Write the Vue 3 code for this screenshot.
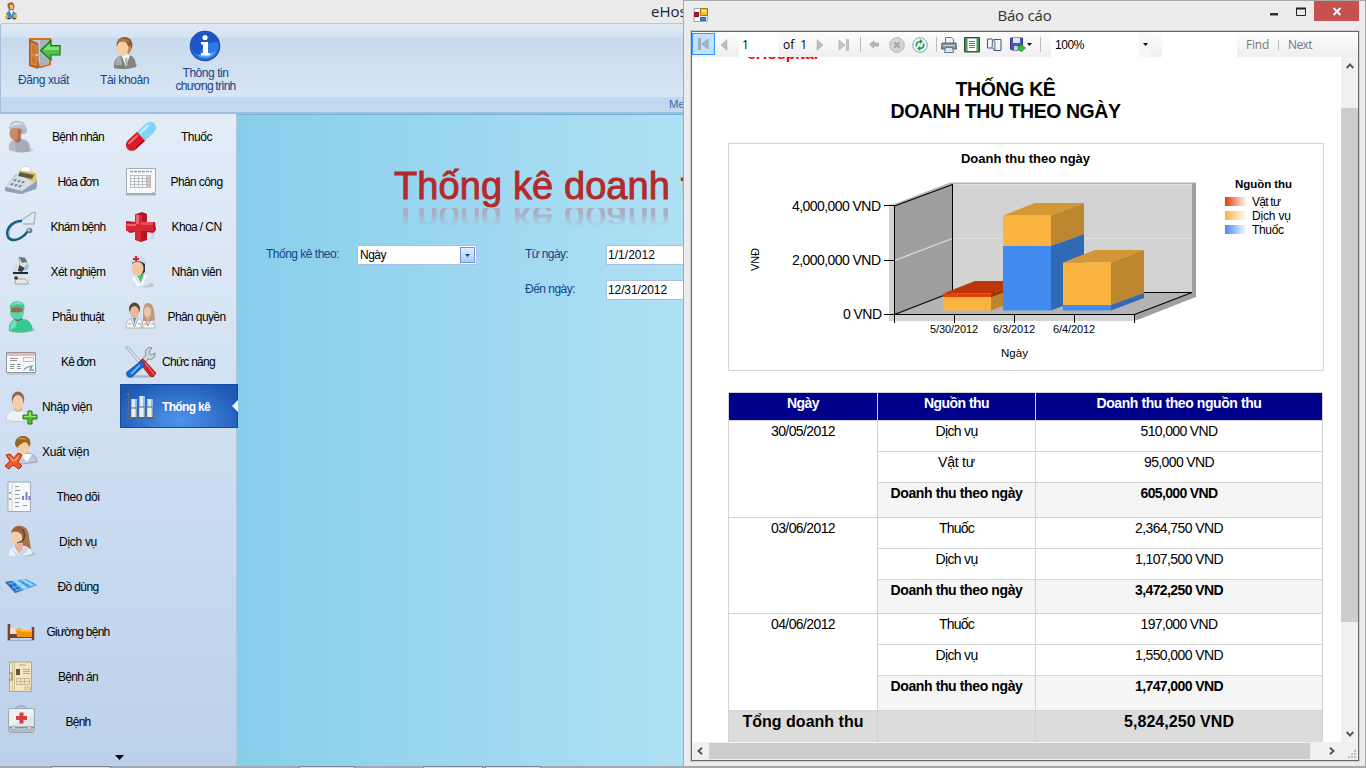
<script setup>
// Tunes letter-spacing so that a label takes the given width in pixels.
const vFit = {
  mounted(el, { value }) {
    if (!value) return
    const w = el.getBoundingClientRect().width
    el.style.letterSpacing = (value - w) / el.textContent.length + 'px'
  }
}

const shadow = '<ellipse cx="19" cy="29" rx="12" ry="2.5" fill="#7890ad" opacity=".3"/>'
const icons = {
  patient: `<ellipse cx="18" cy="29" rx="11" ry="2.500" fill="#7890ad" opacity=".25"/><path d="M4 29c-1-7 2-10 7-11h7c6 1 8 6 7 12-6 2-15 2-21-1z" fill="#b9bac6"/><path d="M10 19c5 1 10-1 13 3l2 8c-6 2-11 1-14 0z" fill="#a8a9b6"/><path d="M9 16h7v3q-4 5-7 0z" fill="#a36749"/><circle cx="18" cy="9" r="4" fill="#b5b6c3"/><ellipse cx="10.500" cy="12" rx="6" ry="7.500" fill="#c58a66"/><path d="M13 8h3.500c0 5-1 8-4 11z" fill="#aa7355"/><path d="M4 8C4 1 9-1 13 0c6 0 9 4 7 9-3-2-10-3-16-1z" fill="#bfc0cc"/><path d="M5 6C7 1 15 0 18 4c-4-1-9 0-13 2z" fill="#e4e4ec"/>`,
  invoice: `<path d="M0 22L11 8l21 6-1 9-15 5-16-3z" fill="#8ba0b8"/><path d="M1 21L12 8l19 7-14 11z" fill="#d7dee7"/><path d="M13 7l2-3 16 3 1 8-5 1z" fill="#dfc35e"/><path d="M15 6l14 3-2 4-14-3z" fill="#5b5b4c"/><path d="M16 1l8-1 2 6-10-1z" fill="#fff" stroke="#bac4d0" stroke-width=".6"/><g fill="#6f8297"><path d="M10 13l2 .5-2 2-2-1zM14 14l2 .5-2 2-2-1zM18 15l2 .5-2 2-2-1zM7 17l2 .5-2 2-2-1zM11 18l2 .5-2 2-2-1zM15 19l2 .5-2 2-2-1z"/></g><path d="M0 21l17 4 15-10v6L17 28 0 25z" fill="#8ea2ba"/>`,
  stetho: `<path d="M14 11L27 2q5-2 3 3l-1 8-11 0" fill="none" stroke="#a9b2bb" stroke-width="1.300"/><path d="M17 10C6 10 0 19 3 26c3 5 10 3 14 0 4-2 5-6 7-7" fill="none" stroke="#16607c" stroke-width="2.500"/><path d="M15 11C8 12 3 18 4 24" fill="none" stroke="#559aaf" stroke-width=".8"/><circle cx="24.500" cy="19.500" r="2.800" fill="#747e86"/><circle cx="24" cy="19" r="1.200" fill="#ccd2d5"/>`,
  microscope: `<path d="M14 1l6 1 3 8-5 4-3-3z" fill="#e3e4df" stroke="#8b8b82" stroke-width=".6"/><path d="M14 1l3 6 5-1-2-4z" fill="#6d7278"/><path d="M14 9l6 3-3 4-4-1z" fill="#3e4143"/><path d="M13 9c-6 5-4 13 2 15h5" fill="none" stroke="#dddcd3" stroke-width="4"/><path d="M8 16h15v2H8z" fill="#242827"/><path d="M20 9h4l-1 4-4 2z" fill="#8fcbdc"/><path d="M12 23h8l3 3v2H10v-3z" fill="#e9e8df" stroke="#8a8b84" stroke-width=".7"/><circle cx="11" cy="22" r="1.800" fill="#333"/>`,
  surgeon: `${shadow}<path d="M4 30c-1-8 3-12 9-13l6 1c6 1 8 6 9 11-6 3-17 4-24 1z" fill="#39c894"/><path d="M5 29c0-7 2-10 7-11l-1 8z" fill="#72dfb5"/><path d="M8 14h9v4q-5 4-8 0z" fill="#7e4b35"/><ellipse cx="12" cy="11" rx="6.500" ry="8" fill="#a1674a"/><path d="M5 8C4 1 11-1 16 1c4 2 4 5 3 8-4-3-9-3-14-1z" fill="#43c494"/><path d="M5 11l8 .5 6-1.500-1 6c-4 4-9 3-12-1z" fill="#58d7ad"/><path d="M6 5c3-5 9-5 12-1-4-1-8-1-12 1z" fill="#83e3bd"/>`,
  rx: `<path d="M1.500 6.500h29v20h-29z" fill="#f8fafb" stroke="#8e979f"/><path d="M2 7h28v3H2z" fill="#f3b4ae"/><path d="M5 12.500h8m-8 2h7m-7 4h5m2 0h4m-11 2h4m3 0h3M5 22.500h4m3 0h4" stroke="#7f868c" stroke-width=".9"/><path d="M18.500 11.500h10v4h-10z" fill="#f4f6f7" stroke="#b9bec3"/><path d="M19 24c1-3 5-3 8-4l-2 4h4" fill="none" stroke="#6f9fc4" stroke-width="1.500"/><path d="M2 28h29" stroke="#a9b6c6"/>`,
  admit: `<ellipse cx="15" cy="28" rx="14" ry="3" fill="#94a8c3" opacity=".5"/><path d="M1 29c0-7 4-10 11-10 8 0 12 4 13 10-7 2-17 2-24 0z" fill="#eef1f5" stroke="#c1c8d1" stroke-width=".7"/><path d="M9 19q4 4 8 0v-5H9z" fill="#d9b28d"/><ellipse cx="13" cy="8" rx="6.300" ry="7.500" fill="#8b6a50"/><ellipse cx="12.800" cy="11.500" rx="5.300" ry="7.500" fill="#f1ceac"/><path d="M23 20h4v4h5v4h-5v5h-4v-5h-5v-4h5z" fill="#54b936" stroke="#247d18"/><path d="M24 21h2v4h5v1H19v-1h5z" fill="#98e767"/>`,
  discharge: `<path d="M9 27c0-7 4-10 12-10 7 0 11 4 11 9l-14 2z" fill="#c3c8da" stroke="#858ca4" stroke-width=".7"/><path d="M15 18l7 8 5-8z" fill="#f9faff"/><ellipse cx="18" cy="7" rx="7.500" ry="7" fill="#a0661d"/><ellipse cx="18.500" cy="12" rx="5.500" ry="6.500" fill="#f3cda4"/><path d="M10 8c0-5 4-8 8-8s8 3 7 8c-1-2-2-2-4-2-4 0-6 4-10 5z" fill="#9c651d"/><path d="M12 3q6-3 10 1-5-1-10-1" fill="#cb9546"/><path d="M1 19l4-1 4 4 4-5 4 2-4 7 4 4-3 3-6-4-4 4-4-3 5-5z" fill="#ef5b26" stroke="#ae2c11"/><path d="M3 19l6 5 5-5-1 4-5 3z" fill="#ff9a65"/>`,
  chart: `<path d="M3 1h22.500v29.500H3z" fill="#f6f8fa" stroke="#a1acb7"/><path d="M7 1v29" stroke="#cbd3db"/><path d="M10 5.500h4m-4 4h5m-5 4h4m-4 4h5m-5 4h4m-4 4h4m4-1h4" stroke="#8f98a1" stroke-width="1"/><path d="M18 19v-4m3.500 4v-8m3 8v-4" stroke="#8182d5" stroke-width="2"/><path d="M5 11v2m0 4v2" stroke="#555" stroke-width="1"/>`,
  service: `<ellipse cx="21" cy="28" rx="9" ry="2.500" fill="#7890ad" opacity=".35"/><path d="M9 1c10-4 15 2 15 10l2 12-12-2z" fill="#a87346"/><path d="M4 29c0-6 3-8 7-9h9c4 1 7 5 7 8-7 2-16 3-23 1z" fill="#eaf0fc"/><path d="M10 17h8v6l-4 5-4-6z" fill="#e8b09a"/><path d="M6 21l7 8 7-8 4 2-7 7h-6z" fill="#cbd7ef"/><ellipse cx="11.500" cy="10.500" rx="6" ry="8" fill="#f3cda8"/><path d="M6 7C7-1 18-2 20 6l-1 11c-2-3-1-7-3-9C12 5 9 5 6 7z" fill="#97613a"/><path d="M17 3c4 5 4 12-5 14" fill="none" stroke="#4d443d" stroke-width="1.200"/>`,
  supplies: `<path d="M0 11l21-3 11 6-21 8z" fill="#3f91e0"/><path d="M0 11l7-1 9 9-6 3z" fill="#2967c5"/><path d="M8 10l4-1 11 8-4 2zM16 9l3-1 10 6-3 1z" fill="#b2e6fb"/><path d="M3 13l18-4M7 17l19-6M10 20l20-7M5 11l8 9M12 10l8 8M19 9l8 6" stroke="#79caf5" stroke-width=".8"/>`,
  bed: `<path d="M4 8v16M28 11v13" stroke="#774236" stroke-width="2.600"/><path d="M4 17h24v5H4z" fill="#7c3e2a"/><path d="M5 12h6l3 2v4H5z" fill="#e9e0d6"/><path d="M11 13l4-1 2 2h10v7H12z" fill="#f5940c"/><path d="M10 13.500h4l3 1.500h10" fill="none" stroke="#ffc141" stroke-width="1.500"/><path d="M2 24.500h27" stroke="#8094ad" opacity=".6"/>`,
  record: `<path d="M4.500 1h22v29.500h-22z" fill="#f3e6c1" stroke="#b0a489"/><path d="M7.500 1v29m2-29v29" stroke="#d0c39b"/><path d="M14 4h7m-3 4.500h7m-7 2h7m-7 2h7" stroke="#b0a385" stroke-width=".9"/><path d="M11 8h4v6h-4z" fill="#665338"/><path d="M11.500 17.500h13v6h-13zM11.500 20.500h13m-9-3v6m4-6v6M20 26h5v2.500h-5z" fill="none" stroke="#c0b28d" stroke-width=".9"/><path d="M4 12h3v7H4" fill="none" stroke="#a87727" stroke-width="1.200"/>`,
  firstaid: `<path d="M11 3q0-3 5-3t5 3" fill="none" stroke="#a2a9b1" stroke-width="1.300"/><rect x="3.500" y="2.500" width="26" height="24" rx="2" fill="#eef1f4" stroke="#9aa5b1"/><path d="M4 20L29 8v12H4z" fill="#dbe0e5" opacity=".7"/><path d="M3.500 20h26v6h-26z" fill="#b3bdc7"/><path d="M4 21.500h25" stroke="#84929f"/><circle cx="8.500" cy="22" r="1.800" fill="#dbe1e6" stroke="#84929f" stroke-width=".6"/><circle cx="24.500" cy="22" r="1.800" fill="#dbe1e6" stroke="#84929f" stroke-width=".6"/><path d="M14.500 6.500h4v3.500h3.500v4h-3.500v3.500h-4V14H11v-4h3.500z" fill="#d93c40"/>`,
  pill: `<g transform="rotate(-43 16 16)"><rect x="-2" y="9.500" width="37" height="12" rx="6" fill="#7fd4f8"/><path d="M16.500 9.500v12H4a6 6 0 0 1 0-12z" fill="#d71c2a"/><path d="M3 12.500h11" stroke="#f07780" stroke-width="2" stroke-linecap="round"/><path d="M19 12.500h10" stroke="#c5eeff" stroke-width="2.500" stroke-linecap="round"/><path d="M5 20.500h11" stroke="#a30d18" stroke-width="1.500"/></g>`,
  calendar: `<path d="M1 27h30v2.500H1z" fill="#75828e" opacity=".55"/><path d="M1.500 2.500h29v23l-4 2h-25z" fill="#f9fafa" stroke="#a3adb3"/><path d="M5 5.500h22" stroke="#9aa2aa" stroke-width="1.500" stroke-dasharray="3 1"/><path d="M21 9h5v13h-5z" fill="#f6b9bd"/><path d="M5 9.500h21M5 12.500h21M5 15.500h21M5 18.500h21M5 21.500h16M5.500 9v13m4-13v13m4-13v13m4-13v13m4-13v13m4-13v13" fill="none" stroke="#b2babf" stroke-width=".9"/>`,
  cross: `<path d="M20 28q6 3 6-3v-5h5l-3 8z" fill="#8b96a8" opacity=".25"/><path d="M11 3l6-2 5 2v9l8-1 1 8-3 3-6-1v8l-6 2-6-2v-8l-5 1-4-3v-9l10 1z" fill="#b31723"/><path d="M10 3l7 1v8h11v8H16v10l-6-2v-8H1v-8h9z" fill="#d92834"/><path d="M11 4l3 0v9h-3zM2 13h9v2H2z" fill="#ee666d"/><path d="M16 11l12 0v3H16z" fill="#e4505a"/>`,
  nurse: `<ellipse cx="21" cy="29" rx="8" ry="2.500" fill="#7890ad" opacity=".35"/><path d="M6 30c0-7 3-10 8-11 7-1 11 4 11 9-6 3-13 4-19 2z" fill="#d6e4fa"/><path d="M12 19l7-1-3 9z" fill="#59c060"/><path d="M8 21l6 9M21 19l-5 10" stroke="#f9fcff" stroke-width="2.500"/><path d="M15 6h5v10l-4 3z" fill="#35303a"/><ellipse cx="12.500" cy="12.500" rx="6" ry="7.500" fill="#efc8a2"/><path d="M7 8c3-3 8-3 12 1l2-3-7-3-7 2z" fill="#4a3a38"/><path d="M6 7C5-2 20-3 21 6l-1 2C16 4 11 5 6 7z" fill="#c9defa"/><path d="M10 0h2v2h2v2h-2v2h-2V4H8V2h2z" fill="#e21d30"/>`,
  team: `<path d="M1 27c0-7 3-9 6-10h6c4 1 5 4 5 10zM16 27c0-7 3-9 7-9 6 0 7 4 7 9z" fill="#f6f6f3" stroke="#a0a39d" stroke-width=".7"/><path d="M18 20c0-12 0-18 5-18s6 6 7 17l-4 1h-6z" fill="#bd9a7d"/><ellipse cx="9.500" cy="8" rx="5.500" ry="6.500" fill="#594338"/><ellipse cx="9.500" cy="11" rx="4.500" ry="6" fill="#e9b79c"/><ellipse cx="22.500" cy="11" rx="3.500" ry="5.500" fill="#edc4a8"/><path d="M8 17h3l-1.500 7z" fill="#4a91bf"/><path d="M21 17h4l-2 6z" fill="#e59a9a"/><path d="M6 18l3.500 8 3.500-8m7 0l3 7 3-7M3 23h3m7 0h3m3 0h3m4 0h3" fill="none" stroke="#888" stroke-width=".8"/>`,
  tools: `<ellipse cx="15" cy="30.500" rx="14" ry="1.300" fill="#55687c" opacity=".35"/><path d="M.5 1l3 0 14 16-2 2z" fill="#e3e8ec" stroke="#7d8b96" stroke-width=".7"/><path d="M16 14l5-5c-2-5 2-9 6-7l-3 4 2 3 4-2c0 6-4 7-7 6l-4 5z" fill="#d0d6da" stroke="#68747c" stroke-width=".8"/><path d="M14 16l4-3 13 14-3 4-3-1z" fill="#d92327" stroke="#99131c" stroke-width=".8"/><path d="M16 15l4 4L8 30c-3 3-8 0-6-4z" fill="#176cd0" stroke="#1848a0" stroke-width=".8"/><path d="M15 19L6 28" stroke="#7dd0ff" stroke-width="1.500"/><path d="M20 17l9 11" stroke="#ff8a83"/>`,
  stats: `<path d="M3.500 29V3m-2 2l2-3 2 3M2 28.500h28M1 22.500h3m-3-7h3m-3-6h3" fill="none" stroke="#51698c" stroke-width="1"/><path d="M6 9h6v9H6zM14 6h6v11h-6zM22 9h6v9h-6z" fill="#8dbcf6"/><path d="M6 18h6v9H6zM14 17h6v10h-6zM22 17h6v10h-6z" fill="#cfd1ce"/><path d="M7 9h3v18H7zM15 6h3v21h-3zM23 9h3v18h-3z" fill="#f4f9ff" opacity=".75"/><path d="M6 18h6m2-1h6m2 0h6M12 18v10m8-10v10m8-10v10M6 27.500h6m2 0h6m2 0h6" stroke="#5c6470"/>`,
  logout: `<path d="M1 1h22v27l-10 3-2 0-10-2z" fill="#d66c21"/><path d="M4 3h17v24l-9 2z" fill="#c2c9d2"/><path d="M12 3h9v24l-9 2z" fill="#a9b3c0"/><path d="M1 2l9 4v26L1 29z" fill="#bd6428"/><path d="M2 4l8 4v22l-8-2z" fill="#dc8a42" stroke="#984616" stroke-width=".7"/><path d="M4 8l4 2v7l-4-1zm0 11l4 1v7l-4-1z" fill="#c87634"/><circle cx="9" cy="18" r="1" fill="#ffe2a4"/><path d="M12.500 13.500L23 3.500v5h9v9.500h-9v5z" fill="#55bd4c" stroke="#087c16" stroke-width="1.200"/><path d="M15 13l7-6v3h9v3z" fill="#85df77"/>`,
  account: `<ellipse cx="20" cy="28" rx="9" ry="2.500" fill="#7890ad" opacity=".35"/><path d="M5 31c-1-9 4-12 9-13h6c5 1 7 6 7 12-6 2-15 3-22 1z" fill="#818282"/><path d="M6 28c0-6 3-9 6-9l1 9z" fill="#a8aaab"/><path d="M12 17l5 13 4-12z" fill="#f4f5f6"/><path d="M16 22l2-2 1 8-2 2z" fill="#a9abad"/><ellipse cx="15.500" cy="8" rx="8" ry="8" fill="#8c5a32"/><path d="M17 9h5v5l-3 4z" fill="#c4885a"/><ellipse cx="13.500" cy="11.500" rx="5.800" ry="7.500" fill="#f6cf9f"/><path d="M8 6C10 0 19 0 21 6c-4-2-9-2-13 0z" fill="#a9784a"/>`,
  info: `<circle cx="16" cy="16" r="15.300" fill="#1a4fae"/><circle cx="16" cy="15.800" r="13.900" fill="#2b78e4"/><path d="M2.500 18C0 5 14-1 24 4q4 3 6 8-15-1-20 13-6-2-7.500-7z" fill="#1c55c4"/><path d="M8 25q7 5 15 1l4-5q-6 3-19 4z" fill="#6dbcff" opacity=".7"/><circle cx="16" cy="7.500" r="2.600" fill="#fff"/><path d="M12 12h7v11h2v2.500h-9V23h2v-8.500h-2z" fill="#fff"/>`,
  app: `<path d="M4 6c-2-6 10-9 10 0l-1 6-7 0z" fill="#a76c2a"/><path d="M7 4h5v6H8z" fill="#f0bd84"/><path d="M2 17l4-5 6 1 5 4-2 7H4z" fill="#3f8fc2"/><path d="M7 12l3 7 2-6z" fill="#fff"/><path d="M2 17l-2 7h4l1-4zM13 18l4-1 1 7-5-1z" fill="#e9ae3c"/><path d="M4 23h4v2H3zM11 23h5v2h-4z" fill="#333"/>`
}

const rowsLeft = [
  ['patient', 'Bệnh nhân', 52], ['invoice', 'Hóa đơn', 41], ['stetho', 'Khám bệnh', 55],
  ['microscope', 'Xét nghiệm', 55], ['surgeon', 'Phẫu thuật', 52], ['rx', 'Kê đơn', 34],
  ['admit', 'Nhập viện', 50, true], ['discharge', 'Xuất viện', 47, true], ['chart', 'Theo dõi', 43],
  ['service', 'Dịch vụ', 38], ['supplies', 'Đồ dùng', 41], ['bed', 'Giường bệnh', 63],
  ['record', 'Bệnh án', 40], ['firstaid', 'Bệnh', 25]
]
const rowsRight = [
  ['pill', 'Thuốc', 31], ['calendar', 'Phân công', 52], ['cross', 'Khoa / CN', 50],
  ['nurse', 'Nhân viên', 50], ['team', 'Phân quyền', 58], ['tools', 'Chức năng', 53, true],
  ['stats', 'Thống kê', 48, true]
]
const days = [
  { date: '30/05/2012', items: [['Dịch vụ', 42, '510,000 VND', 77], ['Vật tư', 37, '95,000 VND', 70]], sum: '605,000 VND', sw: 77 },
  { date: '03/06/2012', items: [['Thuốc', 35, '2,364,750 VND', 88], ['Dịch vụ', 42, '1,107,500 VND', 88]], sum: '3,472,250 VND', sw: 88 },
  { date: '04/06/2012', items: [['Thuốc', 35, '197,000 VND', 77], ['Dịch vụ', 42, '1,550,000 VND', 88]], sum: '1,747,000 VND', sw: 88 }
]
const statusTabs = [[51, 60], [299, 56], [423, 60], [485, 56]]
const legend = [['Vật tư', 29, 'gr'], ['Dịch vụ', 39, 'go'], ['Thuốc', 32, 'gb']]
</script>

<template>
  <div class="desktop">
    <header class="titlebar">
      <svg class="appicon" width="16" height="18" viewBox="0 0 18 26" v-html="icons.app"></svg>
      <span class="maintitle">eHospital</span>
    </header>
    <section class="ribbon">
      <div class="tools">
        <div class="tool t1"><svg width="32" height="32" viewBox="0 0 32 32" v-html="icons.logout"></svg><span v-fit="51">Đăng xuất</span></div>
        <div class="tool t2"><svg width="32" height="32" viewBox="0 0 32 32" v-html="icons.account"></svg><span v-fit="49">Tài khoản</span></div>
        <div class="tool t3"><svg width="32" height="32" viewBox="0 0 32 32" v-html="icons.info"></svg><span v-fit="46">Thông tin</span><span v-fit="60">chương trình</span></div>
      </div>
      <div class="group">Menu</div>
    </section>
    <div class="body">
      <nav class="side">
        <div class="cols">
          <div class="col">
            <div v-for="r in rowsLeft" :key="r[1]" class="item" :class="{ near: r[3] }">
              <svg width="32" height="32" viewBox="0 0 32 32" v-html="icons[r[0]]"></svg>
              <div class="lab"><span v-fit="r[2]">{{ r[1] }}</span></div>
            </div>
          </div>
          <div class="col">
            <div v-for="r in rowsRight" :key="r[1]" class="item" :class="{ near: r[3], active: r[0] === 'stats' }">
              <svg width="32" height="32" viewBox="0 0 32 32" v-html="icons[r[0]]"></svg>
              <div class="lab"><span v-fit="r[2]">{{ r[1] }}</span></div>
              <i v-if="r[0] === 'stats'" class="notch"></i>
            </div>
          </div>
        </div>
        <svg class="more" width="9" height="5" viewBox="0 0 9 5"><path d="M0 0h9L4.500 5z" /></svg>
      </nav>
      <main class="content">
        <div class="banner">
          <div class="big">Thống kê doanh thu</div>
          <div class="mirror"><div class="big">Thống kê doanh thu</div></div>
        </div>
        <div class="form">
          <label class="l1"><span v-fit="73">Thống kê theo:</span></label>
          <div class="select"><span v-fit="26">Ngày</span><b><svg width="5" height="3" viewBox="0 0 5 3"><path d="M0 0h5L2.500 3z" fill="#15428b" /></svg></b></div>
          <label class="l2"><span v-fit="43">Từ ngày:</span></label>
          <div class="field"><span v-fit="47">1/1/2012</span></div>
          <label class="l3"><span v-fit="50">Đến ngày:</span></label>
          <div class="field f2"><span v-fit="59">12/31/2012</span></div>
        </div>
      </main>
    </div>
    <footer class="status"><i v-for="s in statusTabs" :key="s[0]" :style="{ left: s[0] + 'px', width: s[1] + 'px' }"></i></footer>

    <section class="win">
      <div class="wtitle">
        <svg class="wicon" width="14" height="14" viewBox="0 0 14 14"><path d="M0 .5h13.500v13H0z" fill="#e8e8e8" stroke="#aaa" /><path d="M1 10h5v3H1zM1 1h4v3H1z" fill="#fff" /><path d="M6.500.5h7v7h-7z" fill="#f6be24" stroke="#a87b0c" /><path d="M8 2h4v2H8z" fill="#ffe480" /><path d="M.5 4.500h4v4h-4z" fill="#c6181c" stroke="#861015" /><path d="M6.500 9.500h5v3h-5z" fill="#3e87dd" stroke="#2461a7" /></svg>
        <span v-fit="54">Báo cáo</span>
        <div class="ctl">
          <svg width="45" height="20" viewBox="0 0 45 20"><path d="M8 12h8v2.500H8z" fill="#333" /><path d="M34.500 7.500h9v7h-9z" fill="none" stroke="#222" /><path d="M34 6.500h10v2H34z" fill="#222" /></svg>
          <div class="close"><svg width="8" height="7" viewBox="0 0 8 7"><path d="M.6 0l6.800 7M7.400 0L.6 7" stroke="#fff" stroke-width="1.800" /></svg></div>
        </div>
      </div>
      <div class="frame">
        <div class="bar">
          <div class="slot first"><svg width="12" height="12" viewBox="0 0 12 12"><path d="M.5.500h2v11h-2zM10 1v10L4 6z" fill="#a9b4c1" stroke="#8797a8" stroke-width=".7" /></svg></div>
          <div class="slot s18"><svg width="8" height="12" viewBox="0 0 8 12"><path d="M7 .5v11L1 6z" fill="#bbb" stroke="#aaa" stroke-width=".5" /></svg></div>
          <div class="page">1</div>
          <div class="slot s29"><span class="of" v-fit="24">of&nbsp; 1</span></div>
          <div class="slot s24"><svg width="8" height="12" viewBox="0 0 8 12"><path d="M1 .5v11L7 6z" fill="#bbb" stroke="#aaa" stroke-width=".5" /></svg></div>
          <div class="slot s23"><svg width="12" height="12" viewBox="0 0 12 12"><path d="M8.500.500h2v11h-2zM1 1v10l6-5z" fill="#c5c5c5" stroke="#aaa" stroke-width=".7" /></svg></div>
          <div class="slot s10"><i class="sep"></i></div>
          <div class="slot s17"><svg width="10" height="9" viewBox="0 0 10 9"><path d="M.5 4.500L5 .8V3h4.500v3H5v2.200z" fill="#b8b8b8" stroke="#a0a0a0" stroke-width=".6" /></svg></div>
          <div class="slot s30"><svg width="16" height="16" viewBox="0 0 16 16"><circle cx="8" cy="8" r="7.300" fill="#d6d6d6" stroke="#b5b5b5" /><path d="M5.300 5.300l5.400 5.400m0-5.400l-5.400 5.400" stroke="#a4a4a4" stroke-width="2" /></svg></div>
          <div class="slot s16"><svg width="16" height="16" viewBox="0 0 16 16"><circle cx="8" cy="8" r="7.300" fill="#eef6fc" stroke="#7ba8d0" /><path d="M4.500 9.500c-1-3 1-5 4-5M11.500 6.500c1 3-1 5-4 5" fill="none" stroke="#20a241" stroke-width="1.700" /><path d="M7.800 2l3.200 2.600-3.200 2.600zM8.200 14L5 11.400l3.200-2.600z" fill="#20a241" /></svg></div>
          <div class="slot s16"><i class="sep"></i></div>
          <div class="slot s10"><svg width="16" height="16" viewBox="0 0 16 16"><path d="M4.500 .5h6l2 2V7h-8z" fill="#eef4fa" stroke="#68727c" /><path d="M1 6h14l.5 6H.5z" fill="#8b959f" stroke="#59626a" /><path d="M2 8h12v1H2z" fill="#c8d0d6" /><path d="M4.500 10.500h7l1 5h-9z" fill="#d5e8f9" stroke="#66798a" /></svg></div>
          <div class="slot s36"><svg width="16" height="16" viewBox="0 0 16 16"><path d="M.5.500h15v14.500H.5z" fill="#4f8f55" stroke="#254f2a" /><path d="M3.500 1.500h9V14h-9z" fill="#fff" /><path d="M5 4.500h6m-6 2h6m-6 2h6m-6 2h6" stroke="#667c9e" /></svg></div>
          <div class="slot s8"><svg width="15" height="13" viewBox="0 0 15 13"><path d="M.5 1h5v9h-5zM7 1.500h7v11H7z" fill="#f3f6fa" stroke="#45556b" /><path d="M5.500 1L8 4v8l-3-2z" fill="#cddbe9" stroke="#6b7d91" /></svg></div>
          <div class="slot s42 exp"><svg width="22" height="15" viewBox="0 0 22 15"><path d="M.5 1h12v12H1.500L.5 12z" fill="#4c55b1" stroke="#34378a" /><path d="M3 1h7v5H3z" fill="#d7e8ff" /><path d="M4 9h6v4H4z" fill="#cad0dc" /><path d="M8 9h3V7l4.500 4L11 15v-2H8z" fill="#35c334" stroke="#14881a" stroke-width=".6" /><path d="M17 6h5l-2.500 3z" fill="#111" /></svg></div>
          <i class="sep"></i>
          <div class="zoomsel"><span v-fit="29">100%</span><b><svg width="5" height="3" viewBox="0 0 5 3"><path d="M0 0h5L2.500 3z" /></svg></b></div>
          <div class="search"></div>
          <div class="slot s41 gray"><span v-fit="23">Find</span></div>
          <i class="sep short"></i>
          <div class="slot s42 gray"><span v-fit="24">Next</span></div>
        </div>
        <div class="view">
          <div class="report">
            <div class="brand"><span v-fit="71">eHospital</span></div>
            <h1><span v-fit="100">THỐNG KÊ</span><span v-fit="230">DOANH THU THEO NGÀY</span></h1>
            <svg class="chart" width="596" height="228" viewBox="728 143 596 228">
              <defs>
                <linearGradient id="gr"><stop stop-color="#e0400a" /><stop offset="1" stop-color="#e0400a" stop-opacity="0" /></linearGradient>
                <linearGradient id="go"><stop stop-color="#fcb441" /><stop offset="1" stop-color="#fcb441" stop-opacity="0" /></linearGradient>
                <linearGradient id="gb"><stop stop-color="#418cf0" /><stop offset="1" stop-color="#418cf0" stop-opacity="0" /></linearGradient>
              </defs>
              <path d="M728.500 143.500h595v227h-595z" fill="#fff" stroke="#d3d3d3" />
              <text x="961" y="163" font-size="13" font-weight="bold" textLength="129">Doanh thu theo ngày</text>
              <path d="M889 204h5.500v117H889zM889 315h245.500v6H889z" fill="#d3d3d3" />
              <path d="M889 206L950 182.500h246l-4 3H953L894.500 206z" fill="#b4b4b4" />
              <path d="M952.500 184.500H1192V292H952.500z" fill="#d3d3d3" />
              <path d="M953 184.500h239" stroke="#e2e2e2" />
              <path d="M1192 184l4-1.500V297l-61.500 24v-6L1192 292z" fill="#a0a0a0" />
              <path d="M894.500 206l58-21.500V292l-58 22.500z" fill="#9e9e9e" />
              <path d="M894.500 314.500l58-22.500H1192l-57.500 22.500z" fill="#b4b4b4" />
              <path d="M894.500 260.500l58-22" stroke="#ddd" stroke-width="1.300" />
              <path d="M952.500 238.500H1192" stroke="#dedede" />
              <path d="M952.500 184v108.500H1192M894.500 205v118M884 205.500h11M884 260.500h11M884 314.500h250.500M954.500 314v9M1014.500 314v9M1074.500 314v9M1134.500 314v9" fill="none" stroke="#000" />
              <path d="M894.500 206l58-21.500M894.500 314.500l58-22.500M1192 292.500l-57.500 22" fill="none" stroke="#000" stroke-width="1.300" />
              <path d="M943 293.500l32-12.500h49l-33 12.500z" fill="#bc3608" />
              <path d="M991 293.500l33-12.500v4l-33 12.500z" fill="#a73007" /><path d="M991 297.500l33-12.500v13l-33 12.500z" fill="#bc862f" />
              <path d="M943 293.500h48v3.500h-48z" fill="#e0400a" /><path d="M943 297h48v13.500h-48z" fill="#fcb441" />
              <path d="M1003 215.500l32-12.500h49l-33 12.500z" fill="#d39736" />
              <path d="M1051 215.500l33-12.500v31l-33 12z" fill="#bc862f" /><path d="M1051 246l33-12v64l-33 12.500z" fill="#3069b4" />
              <path d="M1003 215.500h48V246h-48z" fill="#fcb441" /><path d="M1003 246h48v64.500h-48z" fill="#418cf0" />
              <path d="M1063 262.500l32-12.500h49l-33 12.500z" fill="#d39736" />
              <path d="M1111 262.500l33-12.500v43l-33 12z" fill="#bc862f" /><path d="M1111 305l33-12v5l-33 12.500z" fill="#3069b4" />
              <path d="M1063 262.500h48V305h-48z" fill="#fcb441" /><path d="M1063 305h48v5.500h-48z" fill="#418cf0" />
              <g font-size="14">
                <text x="792" y="211" textLength="89">4,000,000 VND</text>
                <text x="792" y="265" textLength="89">2,000,000 VND</text>
                <text x="843" y="319" textLength="39">0 VND</text>
              </g>
              <g font-size="11">
                <text x="930" y="332.500" textLength="48">5/30/2012</text>
                <text x="993" y="332.500" textLength="42">6/3/2012</text>
                <text x="1053" y="332.500" textLength="42">6/4/2012</text>
                <text x="1001" y="357" font-size="11.500" textLength="27">Ngày</text>
                <text transform="translate(758.500 271) rotate(-90)" textLength="23">VNĐ</text>
              </g>
              <text x="1235" y="188" font-size="11.500" font-weight="bold" textLength="57">Nguồn thu</text>
              <g v-for="(l, i) in legend" :key="l[0]">
                <rect x="1225" :y="197 + i * 14" width="22" height="9" :fill="`url(#${l[2]})`" />
                <text x="1252" :y="206 + i * 14" font-size="12" :textLength="l[1]">{{ l[0] }}</text>
              </g>
            </svg>
            <table>
              <colgroup><col class="c1"><col class="c2"><col class="c3"></colgroup>
              <thead><tr><th><span v-fit="32">Ngày</span></th><th><span v-fit="65">Nguồn thu</span></th><th><span v-fit="165">Doanh thu theo nguồn thu</span></th></tr></thead>
              <tbody v-for="d in days" :key="d.date">
                <tr v-for="(it, i) in d.items" :key="i">
                  <td v-if="i === 0" :rowspan="d.items.length + 1"><span v-fit="64">{{ d.date }}</span></td>
                  <td><span v-fit="it[1]">{{ it[0] }}</span></td>
                  <td><span v-fit="it[3]">{{ it[2] }}</span></td>
                </tr>
                <tr class="sum"><td><span v-fit="132">Doanh thu theo ngày</span></td><td><span v-fit="d.sw">{{ d.sum }}</span></td></tr>
              </tbody>
              <tfoot><tr><td><span v-fit="121">Tổng doanh thu</span></td><td></td><td><span v-fit="110">5,824,250 VND</span></td></tr></tfoot>
            </table>
          </div>
          <div class="vs">
            <svg width="8" height="6" viewBox="0 0 8 6"><path d="M.7 5L4 1.500 7.300 5" fill="none" stroke="#555" stroke-width="1.900" /></svg>
            <i></i>
            <svg width="8" height="6" viewBox="0 0 8 6"><path d="M.7 1L4 4.500 7.300 1" fill="none" stroke="#555" stroke-width="1.900" /></svg>
          </div>
        </div>
        <div class="hs">
          <svg width="6" height="8" viewBox="0 0 6 8"><path d="M5 .7L1.500 4 5 7.300" fill="none" stroke="#555" stroke-width="1.900" /></svg>
          <i></i>
          <svg width="6" height="8" viewBox="0 0 6 8"><path d="M1 .7L4.500 4 1 7.300" fill="none" stroke="#555" stroke-width="1.900" /></svg>
          <svg class="grip" width="9" height="9" viewBox="0 0 9 9"><path d="M6 0h2v2H6zM3 3h2v2H3zM6 3h2v2H6zM0 6h2v2H0zM3 6h2v2H3zM6 6h2v2H6z" fill="#bcbcbc" /></svg>
        </div>
      </div>
    </section>
  </div>
</template>

<style>
body { margin: 0; overflow: hidden; }
</style>

<style scoped>
* { box-sizing: border-box; }
.desktop { position: relative; width: 1366px; height: 768px; overflow: hidden; display: flex; flex-direction: column; background: #ebebeb; font: 12px "Liberation Sans", Arial, sans-serif; color: #000; }
span { display: inline-block; white-space: nowrap; }
svg { display: block; flex: none; overflow: visible; }
.titlebar { height: 23px; flex: none; display: flex; background: #ebebeb; }
.appicon { margin: 2px 0 0 3px; overflow: hidden; }
.maintitle { margin-left: 632px; font: 15px/23px "Open Sans", "Noto Sans", sans-serif; color: #222; }
.ribbon { height: 91px; flex: none; border: 1px solid #a5bedb; border-bottom: 2px solid #9dbedf; border-top-color: #b7c7d8; border-radius: 3px 0 0 0; display: flex; flex-direction: column; background: linear-gradient(#dfe9f4 0, #d6e3f1 13px, #c7d9ec 14px, #d8e6f5 73px); }
.tools { height: 73px; display: flex; color: #15428b; }
.tool { display: flex; flex-direction: column; align-items: center; line-height: 13px; width: 81px; }
.t1, .t2 { padding-top: 13px; }
.t1 { margin-left: 2px; }
.t1 span, .t2 span { margin-top: 5px; }
.t3 { padding-top: 6px; }
.t3 svg { margin-bottom: 5px; margin-left: -2px; }
.group { height: 15px; background: #c1d8f0; color: #3e6aaa; padding-left: 668px; line-height: 15px; font-size: 11.5px; }
.body { flex: 1; display: flex; min-height: 0; }
.side { width: 237px; flex: none; background: linear-gradient(#e3edf8, #bbd0ea); border-right: 1px solid #afc5dc; display: flex; flex-direction: column; }
.cols { display: flex; height: 640px; flex: none; }
.col { width: 119px; flex: none; }
.col + .col { width: 118px; margin-left: 1px; }
.item { position: relative; height: 45px; padding: 0 0 0 5px; display: flex; align-items: center; }
.lab { flex: 1; padding-left: 0; display: flex; justify-content: center; line-height: 16px; }
.col + .col .lab { padding-right: 2px; }
.near .lab { justify-content: flex-start; padding-left: 5px; }
.active { height: 44px; color: #fff; font-weight: bold; border: 1px solid #164a9c; padding-left: 4px; background: radial-gradient(ellipse at 50% 85%, #5094ee, #1c58b4 85%); }
.active .lab { padding-top: 1px; }
.notch { position: absolute; right: -1px; top: 15px; border: 6px solid transparent; border-right-color: #f3f8fd; border-left: 0; }
.more { margin: 1px 0 0 115px; }
.content { flex: 1; background: linear-gradient(90deg, #87ceeb, #b0e0f4 447px, #cdedf9); border-top: 1px solid #74b4d2; }
.banner { padding: 48px 0 0 157px; height: 130px; }
.big { font-size: 38px; line-height: 46px; height: 46px; white-space: nowrap; color: #b22a2c; -webkit-text-stroke: .9px #b22a2c; letter-spacing: .1px; }
.mirror { height: 18px; overflow: hidden; margin-top: -1px; -webkit-mask-image: linear-gradient(#000 30%, transparent); mask-image: linear-gradient(#000 30%, transparent); }
.mirror .big { transform: scaleY(-1); margin-top: -13px; color: #acacc2; -webkit-text-stroke-color: #acacc2; }
.form { display: grid; grid-template-columns: 91px 120px 48px 81px 120px; row-gap: 15px; padding-left: 29px; color: #15428b; }
.form label { line-height: 19px; }
.l2, .l3 { grid-column: 4; }
.select, .field { height: 20px; border: 1px solid #a9bfe0; background: #fff; color: #000; line-height: 18px; padding-left: 2px; }
.select { display: flex; justify-content: space-between; }
.select b { width: 15px; height: 16px; margin: 1px; border: 1px solid #6c96c9; background: linear-gradient(#e0edff, #a9ccf7); display: flex; align-items: center; justify-content: center; }
.field { padding-left: 1px; }
.status { height: 2px; flex: none; background: #a3a9b2; position: relative; }
.status i { position: absolute; top: 0; height: 2px; background: #ddd; border: 1px solid #7e8690; border-bottom: 0; }

.win { position: absolute; left: 683px; top: 0; width: 683px; height: 768px; background: #ececec; border: 1px solid #a8a8a8; border-bottom-width: 2px; display: flex; flex-direction: column; }
.wtitle { height: 30px; flex: none; position: relative; text-align: center; font: 15px/28px "Open Sans", "Noto Sans", sans-serif; color: #333; }
.wicon { position: absolute; left: 10px; top: 7px; }
.ctl { position: absolute; right: 6px; top: 0; display: flex; gap: 7px; }
.close { width: 45px; height: 20px; background: #c75050; display: flex; align-items: center; justify-content: center; }
.frame { width: 668px; height: 730px; margin-left: 7px; border: 1px solid #686868; outline: 1px solid #cfcfcf; display: flex; flex-direction: column; background: #fff; }
.bar { height: 25px; flex: none; display: flex; align-items: center; background: linear-gradient(#fdfdfd, #efefef); font-size: 12px; }
.slot { flex: none; display: flex; align-items: center; justify-content: center; height: 100%; }
.first { width: 23px; height: 22px; border: 1px solid #3399ff; background: #c2e0ff; align-self: flex-start; margin-top: 1px; }
.s8 { width: 8px } .s10 { width: 10px } .s16 { width: 16px } .s17 { width: 17px } .s18 { width: 18px }
.s23 { width: 23px } .s24 { width: 24px } .s29 { width: 29px } .s30 { width: 30px } .s36 { width: 36px }
.s41 { width: 41px } .s42 { width: 42px }
.s29 { padding-left: 3px; }
.exp { padding-left: 4px; }
.gray { color: #787878; font: 12px "Open Sans", sans-serif; padding-bottom: 1px; }
.sep { width: 1px; height: 15px; background: #bdbdbd; flex: none; }
.short { height: 10px; }
.page { width: 40px; height: 24px; margin-left: 6px; background: #fff; padding-left: 3px; line-height: 23px; font-family: "Open Sans", sans-serif; flex: none; }
.of { font-family: "Open Sans", sans-serif; padding-bottom: 1px; }
.zoomsel { width: 100px; height: 24px; margin-left: 10px; background: #fff; display: flex; justify-content: space-between; line-height: 24px; padding-left: 4px; flex: none; }
.zoomsel b { width: 12px; background: #f7f7f7; display: flex; align-items: center; justify-content: center; }
.search { width: 75px; height: 24px; margin-left: 11px; background: #fff; flex: none; }
.view { height: 685px; flex: none; display: flex; overflow: hidden; }
.report { width: 649px; height: 685px; overflow: hidden; background: #fff; }
.brand { height: 5px; overflow: hidden; padding-left: 55px; color: #f00; font-weight: bold; font-size: 16px; display: flex; align-items: flex-end; }
.brand span { line-height: 18px; margin-bottom: -1px; }
h1 { margin: 16px 0 0; padding-right: 22px; display: flex; flex-direction: column; align-items: center; font-size: 19.5px; line-height: 22px; font-weight: bold; }
.chart { margin: 21px 0 0 36px; font-family: "Liberation Sans", Arial, sans-serif; }
table { margin: 21px 0 0 36px; width: 595px; border-collapse: collapse; table-layout: fixed; font-size: 14px; line-height: 16px; text-align: center; }
.c1 { width: 149px } .c2 { width: 158px } .c3 { width: 287px }
td, th { border: 1px solid #d3d3d3; padding: 2px 0 0; vertical-align: top; height: 31px; }
th { background: #00008b; color: #fff; height: 28px; }
.sum td { height: 34.600px; background: #f5f5f5; font-weight: bold; }
tfoot td { background: #dcdcdc; font-weight: bold; font-size: 16px; padding-top: 3px; height: 40px; border-color: #d0d0d0; }
.vs { width: 17px; background: #f0f0f0; display: flex; flex-direction: column; align-items: center; }
.vs svg:first-child { margin-top: 6px; }
.vs i { width: 17px; height: 514px; background: #cdcdcd; margin: 39px 0 109px; flex: none; }
.hs { height: 18px; background: #f0f0f0; display: flex; align-items: center; }
.hs svg:first-child { margin-left: 5px; }
.hs i { width: 601px; height: 16px; background: #cdcdcd; margin: 0 19px 0 6px; flex: none; }
.grip { margin: 6px 0 0 13px; }
</style>
